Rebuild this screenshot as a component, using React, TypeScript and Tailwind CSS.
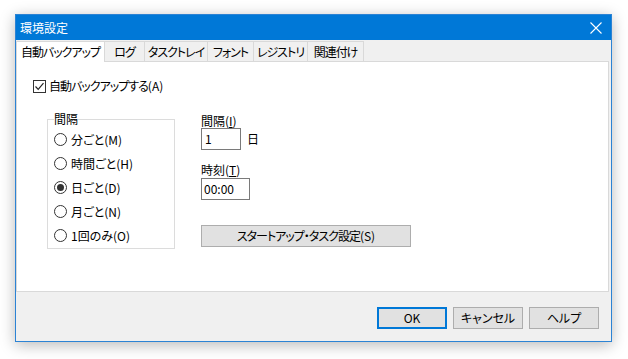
import React from 'react';

const font = "[font-family:'Noto_Sans_CJK_JP','Noto_Sans',sans-serif] [font-feature-settings:'palt']";

const tabs = ['自動バックアップ', 'ログ', 'タスクトレイ', 'フォント', 'レジストリ', '関連付け'];
const tabWidths = [89, 41, 64, 47, 55, 57];

const radios = [
    { label: '分ごと', key: 'M' },
    { label: '時間ごと', key: 'H' },
    { label: '日ごと', key: 'D', checked: true },
    { label: '月ごと', key: 'N' },
    { label: '1回のみ', key: 'O' },
];

// Small radio button in the Windows 10 style
const Radio = ({ checked }: { checked?: boolean }) => (
    <span className="flex h-[13px] w-[13px] shrink-0 items-center justify-center rounded-full border border-[#333] bg-white">
        {checked && <span className="h-[7px] w-[7px] rounded-full bg-[#333]" />}
    </span>
);

const Button = ({ children, width, primary }: { children: React.ReactNode; width: string; primary?: boolean }) => (
    <div
        className={`flex h-[22px] items-center justify-center bg-[#E1E1E1] text-[12px] text-black ${width} ${
            primary ? 'border-2 border-[#0078D7]' : 'border border-[#ADADAD]'
        }`}
    >
        {children}
    </div>
);

const App = () => {
    return (
        <div className={`h-[359px] w-[628px] overflow-hidden bg-white pl-[15px] pt-[14px] ${font}`}>
            <div className="flex h-[328px] w-[597px] flex-col border border-[#2C83D4] bg-[#F0F0F0] shadow-[0_3px_14px_rgba(0,0,0,0.28)]">
                {/* Title bar */}
                <div className="flex h-[25px] items-center justify-between bg-[#0078D7] pl-[4px] pr-[9px] text-[12px] text-white">
                    <span>環境設定</span>
                    <svg width="12" height="12" viewBox="0 0 12 12">
                        <path d="M0.5 0.5 L11.5 11.5 M11.5 0.5 L0.5 11.5" stroke="white" strokeWidth="1.1" />
                    </svg>
                </div>

                {/* Tabs */}
                <div className="mt-px flex h-[20px] items-end whitespace-nowrap">
                    {tabs.map((t, i) =>
                        i === 0 ? (
                            <div
                                key={t}
                                style={{ width: tabWidths[i] }}
                                className="relative z-10 -mb-px flex h-[21px] items-center justify-center border border-b-0 border-[#D9D9D9] bg-white text-[12px] tracking-[-1px] text-black"
                            >
                                {t}
                            </div>
                        ) : (
                            <div
                                key={t}
                                style={{ width: tabWidths[i] }}
                                className="-ml-px flex h-[20px] items-center justify-center border border-b-0 border-[#D9D9D9] bg-[#F0F0F0] text-[12px] tracking-[-1px] text-black"
                            >
                                {t}
                            </div>
                        ),
                    )}
                </div>

                {/* Tab page */}
                <div className="mr-[2px] flex h-[231px] flex-col border border-[#D9D9D9] bg-white pl-[16px] pt-[15px] text-[12px] text-black">
                    <div className="flex items-center gap-[3px]">
                        <span className="flex h-[13px] w-[13px] items-center justify-center border border-[#333] bg-white">
                            <svg width="11" height="11" viewBox="0 0 11 11">
                                <path d="M1.5 5.5 L4.2 8.3 L9.5 2.2" stroke="#222" strokeWidth="1.2" fill="none" />
                            </svg>
                        </span>
                        <span>
                            <span className="tracking-[-1px]">自動バックアップする</span>(A)
                        </span>
                    </div>

                    <div className="mt-[18px] flex">
                        {/* Group box */}
                        <div className="relative ml-[14px] mt-[6px] flex h-[130px] w-[128px] flex-col gap-[7px] border border-[#DCDCDC] pl-[6px] pt-[11px]">
                            <span className="absolute left-[6px] top-[-9px] bg-white leading-[16px]">間隔</span>
                            {radios.map((r) => (
                                <div key={r.key} className="flex h-[17px] items-center gap-[4px]">
                                    <Radio checked={r.checked} />
                                    <span>
                                        {r.label}({r.key})
                                    </span>
                                </div>
                            ))}
                        </div>

                        {/* Right column */}
                        <div className="ml-[26px] flex flex-col">
                            <span className="leading-[15px]">
                                間隔(<span className="underline">I</span>)
                            </span>
                            <div className="flex items-center gap-[6px]">
                                <div className="flex h-[22px] w-[40px] items-center border border-[#7A7A7A] pl-[3px]">1</div>
                                <span>日</span>
                            </div>
                            <span className="mt-[12px] leading-[16px]">
                                時刻(<span className="underline">T</span>)
                            </span>
                            <div className="flex h-[22px] w-[49px] items-center border border-[#7A7A7A] pl-[2px]">00:00</div>
                            <div className="mt-[25px] flex h-[22px] w-[210px] items-center justify-center border border-[#ADADAD] bg-[#E1E1E1]">
                                <span className="tracking-[-1px]">スタートアップ・タスク設定</span>(S)
                            </div>
                        </div>
                    </div>
                </div>

                {/* Footer buttons */}
                <div className="mt-[15px] flex justify-end gap-[6px] pr-[12px]">
                    <Button width="w-[70px]" primary>
                        OK
                    </Button>
                    <Button width="w-[70px]">キャンセル</Button>
                    <Button width="w-[70px]">ヘルプ</Button>
                </div>
            </div>
        </div>
    );
};

export default App;
